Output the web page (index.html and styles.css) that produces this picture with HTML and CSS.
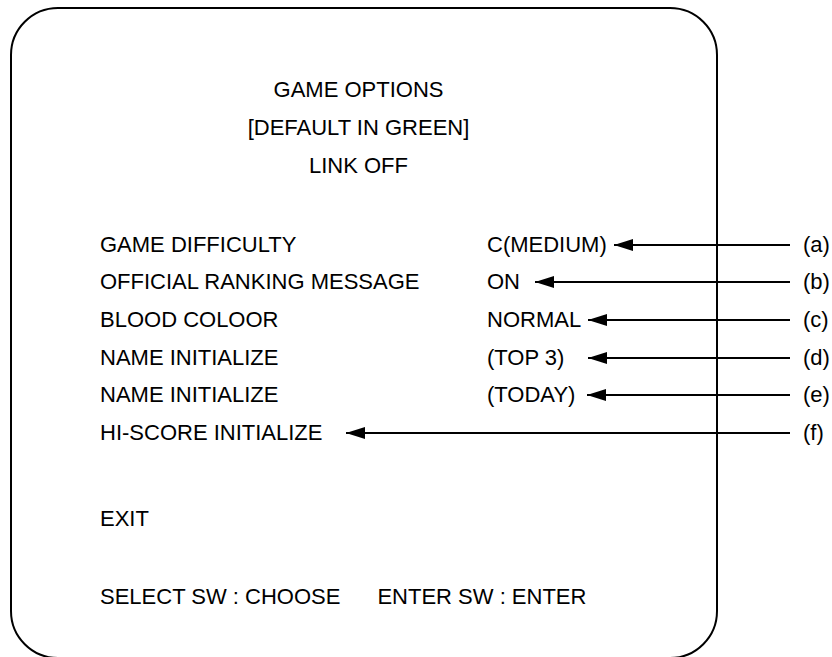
FILE: index.html
```html
<!DOCTYPE html>
<html>
<head>
<meta charset="UTF-8">
<title>GAME OPTIONS</title>
<link rel="stylesheet" href="styles.css">
</head>
<body>

<div class="screen">
  <div class="title">
    <div>GAME OPTIONS</div>
    <div>[DEFAULT IN GREEN]</div>
    <div>LINK OFF</div>
  </div>

  <div class="options">
    <div class="row">
      <span class="label">GAME DIFFICULTY</span>
      <span class="value">C(MEDIUM)</span>
      <span class="arrow gap-a"></span>
      <span class="ref">(a)</span>
    </div>
    <div class="row">
      <span class="label">OFFICIAL RANKING MESSAGE</span>
      <span class="value">ON</span>
      <span class="arrow gap-b"></span>
      <span class="ref">(b)</span>
    </div>
    <div class="row">
      <span class="label">BLOOD COLOOR</span>
      <span class="value">NORMAL</span>
      <span class="arrow gap-c"></span>
      <span class="ref">(c)</span>
    </div>
    <div class="row">
      <span class="label">NAME INITIALIZE</span>
      <span class="value">(TOP 3)</span>
      <span class="arrow gap-d"></span>
      <span class="ref">(d)</span>
    </div>
    <div class="row">
      <span class="label">NAME INITIALIZE</span>
      <span class="value">(TODAY)</span>
      <span class="arrow gap-e"></span>
      <span class="ref">(e)</span>
    </div>
    <div class="row">
      <span>HI-SCORE INITIALIZE</span>
      <span class="arrow gap-f"></span>
      <span class="ref">(f)</span>
    </div>
  </div>

  <div class="exit">EXIT</div>

  <div class="help">
    <span>SELECT SW : CHOOSE</span>
    <span>ENTER SW : ENTER</span>
  </div>
</div>

</body>
</html>
```

FILE: styles.css
```css
body {
  margin: 0;
  font-family: "Liberation Sans", Arial, sans-serif;
  font-size: 22px;
  color: #000;
  background-color: #fff;
  overflow: hidden;
}
.screen {
  margin: 7px 0 0 10px;
  width: 708px;
  height: 652px;
  box-sizing: border-box;
  border: 2px solid #000;
  border-radius: 48px;
  padding: 62px 0 0 88px;
}
.title {
  width: 517px;
  text-align: center;
  line-height: 38px;
}
.options {
  margin-top: 41px;
  margin-right: -115px;
}
.row {
  display: flex;
  align-items: center;
  height: 37.6px;
}
.label {
  width: 387px;
  flex-shrink: 0;
}
.arrow {
  flex: 1;
  height: 2px;
  background-color: #000;
  position: relative;
}
/* arrow head */
.arrow::before {
  content: "";
  position: absolute;
  left: 0;
  top: -5px;
  border-right: 19px solid #000;
  border-top: 6px solid transparent;
  border-bottom: 6px solid transparent;
}
.gap-a { margin-left: 7px; }
.gap-b { margin-left: 15px; }
.gap-c { margin-left: 7px; }
.gap-d { margin-left: 24px; }
.gap-e { margin-left: 12px; }
.gap-f { margin-left: 24px; }
.ref {
  margin-left: 13px;
  width: 28px;
}
.exit {
  margin-top: 48px;
  line-height: 38px;
}
.help {
  margin-top: 40px;
  line-height: 38px;
  display: flex;
  gap: 37px;
}
```
